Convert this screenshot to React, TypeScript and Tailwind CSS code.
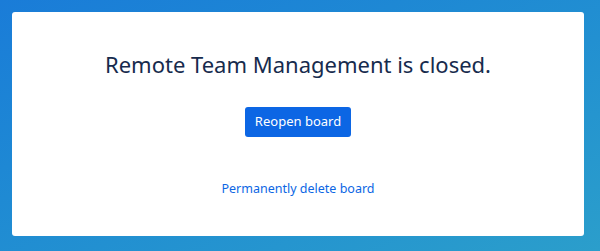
export default function App() {
  return (
    <div
      className="h-[251px] w-[600px] bg-gradient-to-br from-[#1a7cd8] to-[#2b9ecb] pt-3 pl-3 pr-4 pb-[15px]"
      style={{ fontFamily: '"Noto Sans", "Open Sans", sans-serif' }}
    >
      <div className="flex h-full flex-col items-center rounded-[3px] bg-white">
        <h1 className="mt-[37px] text-[22px] leading-[30px] text-[#172b4d]">
          Remote Team Management is closed.
        </h1>
        <button className="mt-[28px] h-[30px] w-[106px] rounded-[3px] bg-[#0c66e4] text-[13px] text-white">
          Reopen board
        </button>
        <a className="mt-[42px] text-[12.5px] leading-5 text-[#0c66e4]" href="#">
          Permanently delete board
        </a>
      </div>
    </div>
  );
}
